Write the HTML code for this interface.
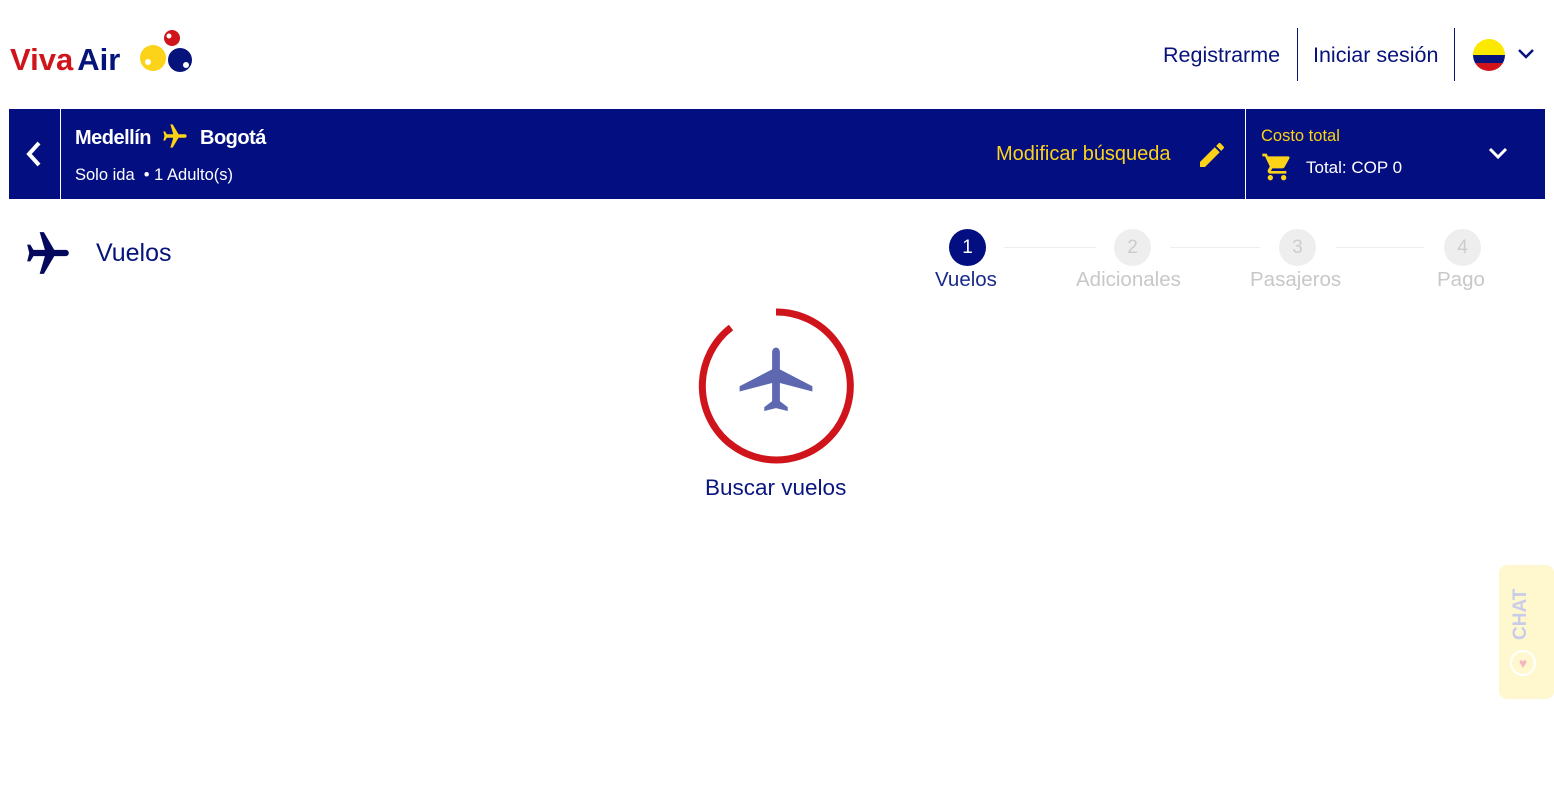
<!DOCTYPE html>
<html><head><meta charset="utf-8"><style>
*{margin:0;padding:0;box-sizing:border-box}
body{width:1554px;height:794px;background:#fff;font-family:"Liberation Sans",sans-serif;position:relative;overflow:hidden;color:#06137a}
.a{position:absolute}
</style></head><body>
<div class="a" style="left:10px;top:40px;font-size:31px;font-weight:bold;letter-spacing:0px;line-height:40px;white-space:nowrap"><span style="color:#d0141b">Viva</span><span style="color:#06137a;margin-left:4px">Air</span></div>
<svg class="a" style="left:136px;top:28px" width="60" height="48"><circle cx="36" cy="10" r="8" fill="#d0141b"/><circle cx="33" cy="8" r="2.5" fill="#fff"/><circle cx="17" cy="30" r="13" fill="#fcd319"/><circle cx="12" cy="34" r="3" fill="#fff"/><circle cx="44" cy="32" r="12" fill="#06137a"/><circle cx="50" cy="37" r="3" fill="#fff"/></svg>
<div class="a" style="left:1163px;top:42px;font-size:21.5px;line-height:26px">Registrarme</div>
<div class="a" style="left:1297px;top:28px;width:1px;height:53px;background:#06137a"></div>
<div class="a" style="left:1313px;top:42px;font-size:21.5px;line-height:26px">Iniciar sesión</div>
<div class="a" style="left:1454px;top:28px;width:1px;height:53px;background:#06137a"></div>
<div class="a" style="left:1473px;top:39px;width:32px;height:32px;border-radius:50%;overflow:hidden"><div style="height:16px;background:#fde800"></div><div style="height:8px;background:#06137a"></div><div style="height:8px;background:#d0141b"></div></div>
<svg class="a" style="left:1516px;top:46px" width="20" height="16"><path d="M3 4l7 7 7-7" stroke="#06137a" stroke-width="2.5" fill="none"/></svg>

<div class="a" style="left:9px;top:109px;width:1536px;height:90px;background:#030f80"></div>
<div class="a" style="left:60px;top:109px;width:1px;height:90px;background:#fff"></div>
<div class="a" style="left:1245px;top:109px;width:1px;height:90px;background:#fff"></div>
<svg class="a" style="left:24px;top:140px" width="20" height="28"><path d="M15 3L5 14l10 11" stroke="#fff" stroke-width="4" fill="none"/></svg>
<div class="a" style="left:75px;top:127px;color:#fff;font-size:20px;font-weight:bold;letter-spacing:-0.5px">Medellín</div>
<svg class="a" style="left:161px;top:122px;transform:rotate(90deg)" width="28" height="28" viewBox="0 0 24 24"><path fill="#fcd319" d="M12 2c-.8 0-1.5.7-1.5 1.5V9L2 14v2l8.5-2.5V19L8 20.5V22l4-1 4 1v-1.5L13.5 19v-5.5L22 16v-2l-8.5-5V3.5C13.5 2.7 12.8 2 12 2z"/></svg>
<div class="a" style="left:200px;top:127px;color:#fff;font-size:20px;font-weight:bold;letter-spacing:-0.5px">Bogotá</div>
<div class="a" style="left:75px;top:166px;color:#fff;font-size:16.5px">Solo ida &nbsp;• 1 Adulto(s)</div>
<div class="a" style="left:996px;top:143px;color:#fcd319;font-size:20px">Modificar búsqueda</div>
<svg class="a" style="left:1196px;top:139px" width="32" height="32" viewBox="0 0 24 24"><path fill="#fcd319" d="M3 17.25V21h3.75L17.81 9.94l-3.75-3.75L3 17.25zM20.71 7.04a1 1 0 000-1.41l-2.34-2.34a1 1 0 00-1.41 0l-1.83 1.83 3.75 3.75 1.83-1.83z"/></svg>
<div class="a" style="left:1261px;top:127px;color:#fcd319;font-size:16.5px">Costo total</div>
<svg class="a" style="left:1261px;top:150px" width="32" height="34" viewBox="0 0 24 24"><path fill="#fcd319" d="M7 18c-1.1 0-2 .9-2 2s.9 2 2 2 2-.9 2-2-.9-2-2-2zM1 2v2h2l3.6 7.6-1.35 2.4C4.5 15.4 5.5 17 7 17h12v-2H7.4l1.1-2h7.45c.75 0 1.4-.4 1.75-1l3.6-6.5A1 1 0 0020.4 4H5.2l-.9-2H1zm16 16c-1.1 0-2 .9-2 2s.9 2 2 2 2-.9 2-2-.9-2-2-2z"/></svg>
<div class="a" style="left:1306px;top:158px;color:#fff;font-size:17px">Total: COP 0</div>
<svg class="a" style="left:1487px;top:145px" width="22" height="16"><path d="M3 4l8 8 8-8" stroke="#fff" stroke-width="3" fill="none"/></svg>

<svg class="a" style="left:23px;top:228px;transform:rotate(90deg)" width="50" height="50" viewBox="0 0 24 24"><path fill="#05095e" d="M12 2c-.8 0-1.5.7-1.5 1.5V9L2 14v2l8.5-2.5V19L8 20.5V22l4-1 4 1v-1.5L13.5 19v-5.5L22 16v-2l-8.5-5V3.5C13.5 2.7 12.8 2 12 2z"/></svg>
<div class="a" style="left:96px;top:239px;font-size:25px">Vuelos</div>

<div class="a" style="left:1004px;top:247px;width:92px;height:1px;background:#eee"></div>
<div class="a" style="left:1170px;top:247px;width:90px;height:1px;background:#eee"></div>
<div class="a" style="left:1336px;top:247px;width:88px;height:1px;background:#eee"></div>
<div class="a" style="left:949px;top:229px;width:37px;height:37px;border-radius:50%;background:#030f80;color:#fff;text-align:center;line-height:37px;font-size:19px">1</div>
<div class="a" style="left:1114px;top:229px;width:37px;height:37px;border-radius:50%;background:#eee;color:#ccc;text-align:center;line-height:37px;font-size:19px">2</div>
<div class="a" style="left:1279px;top:229px;width:37px;height:37px;border-radius:50%;background:#eee;color:#ccc;text-align:center;line-height:37px;font-size:19px">3</div>
<div class="a" style="left:1444px;top:229px;width:37px;height:37px;border-radius:50%;background:#eee;color:#ccc;text-align:center;line-height:37px;font-size:19px">4</div>
<div class="a" style="left:935px;top:268px;font-size:20.5px;color:#1a2a8a">Vuelos</div>
<div class="a" style="left:1076px;top:268px;font-size:20.5px;color:#c8c8c8">Adicionales</div>
<div class="a" style="left:1250px;top:268px;font-size:20.5px;color:#c8c8c8">Pasajeros</div>
<div class="a" style="left:1437px;top:268px;font-size:20.5px;color:#c8c8c8">Pago</div>

<svg class="a" style="left:698px;top:306px" width="160" height="160"><path d="M80 5 A74 74 0 1 1 35 20.5" stroke="#d0141b" stroke-width="7" fill="none" transform="translate(-2,1)"/></svg>
<svg class="a" style="left:737px;top:346px" width="78" height="78" viewBox="0 0 24 24"><path fill="#5e68b0" d="M12 0.5c-.8 0-1.2.7-1.2 1.5V7.2L0.8 12.4v1.6l10-2.6V17L8.4 18.8v1.2l3.6-.9 3.6.9v-1.2L13.2 17v-5.6l10 2.6v-1.6L13.2 7.2V2c0-.8-.4-1.5-1.2-1.5z"/></svg>
<div class="a" style="left:705px;top:475px;font-size:22.5px;color:#0a167e">Buscar vuelos</div>

<div class="a" style="left:1499px;top:565px;width:55px;height:134px;background:#fff8cf;border-radius:8px"></div>
<div class="a" style="left:1510px;top:640px;font-size:19px;color:#c8cce8;transform:rotate(-90deg);transform-origin:0 0;font-weight:bold">CHAT</div>
<div class="a" style="left:1510px;top:650px;width:26px;height:26px;border-radius:50%;border:2px solid #fff;text-align:center;color:#f3b7c0;font-size:14px;line-height:22px">♥</div>
</body></html>
